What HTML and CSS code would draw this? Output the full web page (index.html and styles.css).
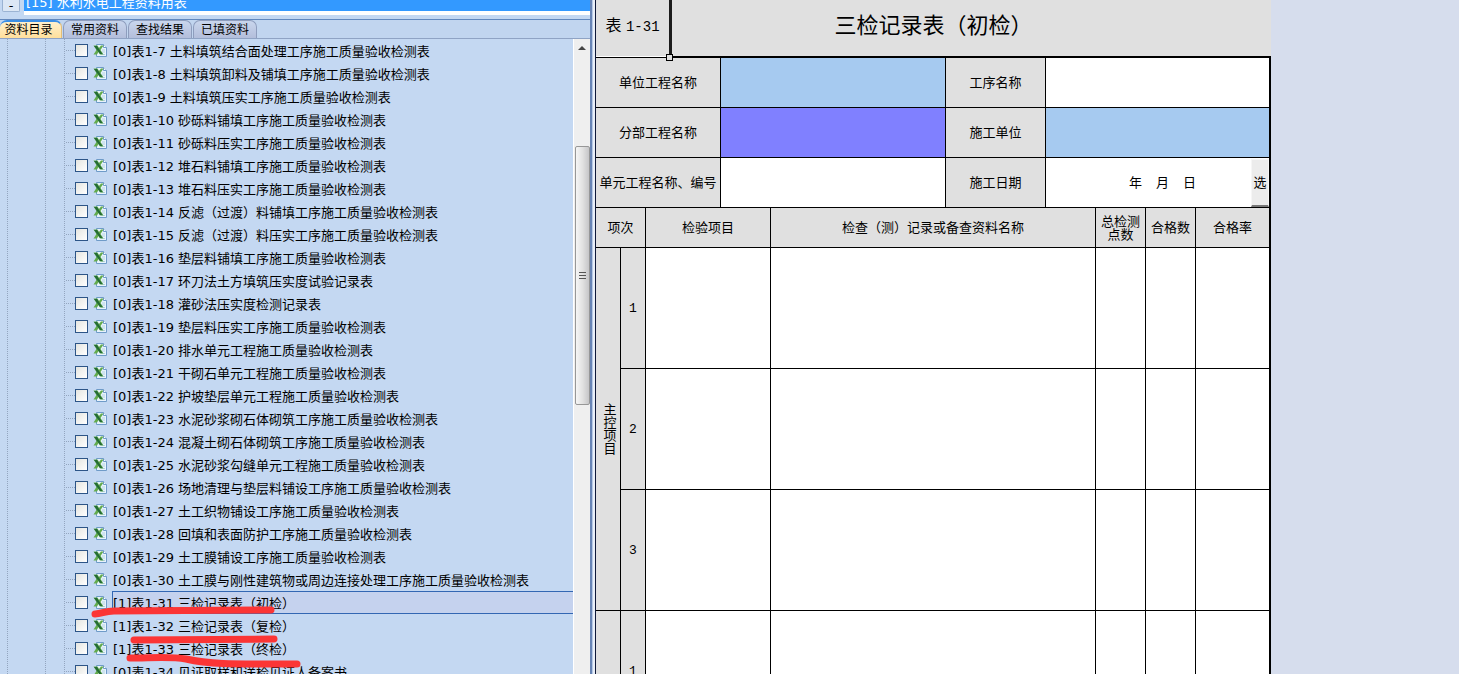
FILE: index.html
```html
<!DOCTYPE html>
<html lang="zh-CN">
<head>
<meta charset="utf-8">
<title>水利水电工程资料用表</title>
<link rel="stylesheet" href="styles.css">
</head>
<body>
<svg class="sprite" aria-hidden="true">
  <symbol id="xls" viewBox="0 0 15 15">
    <path d="M3.500 1.500h7l3 3v9h-10z" fill="#e8f3fd" stroke="#6f9bc8"/>
    <path d="M10.500 1.500v3h3" fill="#fff" stroke="#6f9bc8"/>
    <path d="M9 7h3M9 9h3M8 11.500h4" stroke="#b5d3e0"/>
    <path d="M0.500 2.500h4l1.500 2.500 2-2.500h2.500L7.500 7l3 4.500H7L5.500 9 4 11.500H0.500L3.500 7z" fill="#63ab4c"/>
    <path d="M1 3h3l5.500 8H7z" fill="#246b35"/>
  </symbol>
</svg>
<div class="app">
  <aside class="side">
    <div class="topbar">
      <button class="fold" aria-label="折叠">-</button>
      <div class="book"><span>[15] 水利水电工程资料用表</span></div>
    </div>
    <nav class="tabs">
      <button class="tab active">资料目录</button>
      <button class="tab">常用资料</button>
      <button class="tab">查找结果</button>
      <button class="tab">已填资料</button>
    </nav>
    <div class="body">
      <ul class="tree">
        <li><label><input type="checkbox"><svg><use href="#xls"/></svg><span>[0]表1-7 土料填筑结合面处理工序施工质量验收检测表</span></label></li>
        <li><label><input type="checkbox"><svg><use href="#xls"/></svg><span>[0]表1-8 土料填筑卸料及铺填工序施工质量验收检测表</span></label></li>
        <li><label><input type="checkbox"><svg><use href="#xls"/></svg><span>[0]表1-9 土料填筑压实工序施工质量验收检测表</span></label></li>
        <li><label><input type="checkbox"><svg><use href="#xls"/></svg><span>[0]表1-10 砂砾料铺填工序施工质量验收检测表</span></label></li>
        <li><label><input type="checkbox"><svg><use href="#xls"/></svg><span>[0]表1-11 砂砾料压实工序施工质量验收检测表</span></label></li>
        <li><label><input type="checkbox"><svg><use href="#xls"/></svg><span>[0]表1-12 堆石料铺填工序施工质量验收检测表</span></label></li>
        <li><label><input type="checkbox"><svg><use href="#xls"/></svg><span>[0]表1-13 堆石料压实工序施工质量验收检测表</span></label></li>
        <li><label><input type="checkbox"><svg><use href="#xls"/></svg><span>[0]表1-14 反滤（过渡）料铺填工序施工质量验收检测表</span></label></li>
        <li><label><input type="checkbox"><svg><use href="#xls"/></svg><span>[0]表1-15 反滤（过渡）料压实工序施工质量验收检测表</span></label></li>
        <li><label><input type="checkbox"><svg><use href="#xls"/></svg><span>[0]表1-16 垫层料铺填工序施工质量验收检测表</span></label></li>
        <li><label><input type="checkbox"><svg><use href="#xls"/></svg><span>[0]表1-17 环刀法土方填筑压实度试验记录表</span></label></li>
        <li><label><input type="checkbox"><svg><use href="#xls"/></svg><span>[0]表1-18 灌砂法压实度检测记录表</span></label></li>
        <li><label><input type="checkbox"><svg><use href="#xls"/></svg><span>[0]表1-19 垫层料压实工序施工质量验收检测表</span></label></li>
        <li><label><input type="checkbox"><svg><use href="#xls"/></svg><span>[0]表1-20 排水单元工程施工质量验收检测表</span></label></li>
        <li><label><input type="checkbox"><svg><use href="#xls"/></svg><span>[0]表1-21 干砌石单元工程施工质量验收检测表</span></label></li>
        <li><label><input type="checkbox"><svg><use href="#xls"/></svg><span>[0]表1-22 护坡垫层单元工程施工质量验收检测表</span></label></li>
        <li><label><input type="checkbox"><svg><use href="#xls"/></svg><span>[0]表1-23 水泥砂浆砌石体砌筑工序施工质量验收检测表</span></label></li>
        <li><label><input type="checkbox"><svg><use href="#xls"/></svg><span>[0]表1-24 混凝土砌石体砌筑工序施工质量验收检测表</span></label></li>
        <li><label><input type="checkbox"><svg><use href="#xls"/></svg><span>[0]表1-25 水泥砂浆勾缝单元工程施工质量验收检测表</span></label></li>
        <li><label><input type="checkbox"><svg><use href="#xls"/></svg><span>[0]表1-26 场地清理与垫层料铺设工序施工质量验收检测表</span></label></li>
        <li><label><input type="checkbox"><svg><use href="#xls"/></svg><span>[0]表1-27 土工织物铺设工序施工质量验收检测表</span></label></li>
        <li><label><input type="checkbox"><svg><use href="#xls"/></svg><span>[0]表1-28 回填和表面防护工序施工质量验收检测表</span></label></li>
        <li><label><input type="checkbox"><svg><use href="#xls"/></svg><span>[0]表1-29 土工膜铺设工序施工质量验收检测表</span></label></li>
        <li><label><input type="checkbox"><svg><use href="#xls"/></svg><span>[0]表1-30 土工膜与刚性建筑物或周边连接处理工序施工质量验收检测表</span></label></li>
        <li class="selected"><label><input type="checkbox"><svg><use href="#xls"/></svg><span>[1]表1-31 三检记录表（初检）</span></label></li>
        <li><label><input type="checkbox"><svg><use href="#xls"/></svg><span>[1]表1-32 三检记录表（复检）</span></label></li>
        <li><label><input type="checkbox"><svg><use href="#xls"/></svg><span>[1]表1-33 三检记录表（终检）</span></label></li>
        <li><label><input type="checkbox"><svg><use href="#xls"/></svg><span>[0]表1-34 见证取样和送检见证人备案书</span></label></li>
      </ul>
      <svg class="marks" viewBox="0 0 220 70" aria-hidden="true">
        <path d="M5 18C12 18 14 15 24 15L181 14"/>
        <path d="M44 44L184 43"/>
        <path d="M40 62C60 62 80 60 96 63C122 69 150 68 207 68"/>
      </svg>
      <div class="scroll">
        <svg class="arrow" viewBox="0 0 8 4"><path d="M4 0l4 4H0z" fill="#444"/></svg>
        <div class="thumb"><i></i><i></i><i></i></div>
      </div>
    </div>
  </aside>
  <div class="splitter"></div>
  <main class="sheet">
    <header class="heading">
      <div class="code">表 <span>1-31</span></div>
      <h1>三检记录表（初检）</h1>
    </header>
    <table>
      <colgroup><col class="w25"><col class="w25"><col class="w75"><col class="w50"><col class="w175"><col class="w100"><col class="w50"><col class="w50"><col class="w50"><col></colgroup>
      <tbody>
        <tr class="info"><th colspan="3">单位工程名称</th><td colspan="2" class="sky"></td><th>工序名称</th><td colspan="4"></td></tr>
        <tr class="info"><th colspan="3">分部工程名称</th><td colspan="2" class="violet"></td><th>施工单位</th><td colspan="4" class="sky"></td></tr>
        <tr class="info"><th colspan="3">单元工程名称、编号</th><td colspan="2"></td><th>施工日期</th><td colspan="4"><div class="date"><div class="ymd"><span>年</span><span>月</span><span>日</span></div><button class="pick">选</button></div></td></tr>
        <tr class="cols"><th colspan="2">项次</th><th colspan="2">检验项目</th><th colspan="3">检查（测）记录或备查资料名称</th><th>总检测<br>点数</th><th>合格数</th><th>合格率</th></tr>
      </tbody>
    </table>
    <table>
      <colgroup><col class="w25"><col class="w25"><col class="w125"><col class="w325"><col class="w50"><col class="w50"><col></colgroup>
      <tbody>
        <tr class="item"><th rowspan="3"><span class="vertical">主控项目</span></th><th>1</th><td></td><td></td><td></td><td></td><td></td></tr>
        <tr class="item"><th>2</th><td></td><td></td><td></td><td></td><td></td></tr>
        <tr class="item"><th>3</th><td></td><td></td><td></td><td></td><td></td></tr>
        <tr class="item"><th></th><th>1</th><td></td><td></td><td></td><td></td><td></td></tr>
      </tbody>
    </table>
  </main>
</div>
</body>
</html>
```
FILE: styles.css
```css
* { box-sizing: border-box; }
body {
  margin: 0;
  background: #d6dded;
  color: #000;
  font: 13px "DejaVu Sans", "Noto Sans CJK SC", sans-serif;
}
button { font: inherit; color: inherit; padding: 0; margin: 0; }
.sprite { display: none; }
.app { display: flex; height: 100vh; overflow: hidden; }

/* Left panel */
.side { flex: none; width: 590px; display: flex; flex-direction: column; background: #c4d8f2; }
.topbar { flex: none; display: flex; gap: 4px; height: 20px; padding: 0 0 4px 2px; border-bottom: 1px solid #6388bd; }
.fold { width: 18px; height: 12px; line-height: 8px; border: 1px solid #9bb3d3; border-top: 0; border-radius: 0 0 2px 2px; background: #dce7f5; }
.book { flex: 1; height: 15px; background: #3399ff; border-bottom: 4px solid #fff; color: #fff; display: flex; align-items: flex-end; }
.book span { line-height: 16px; padding-left: 2px; }
.tabs { flex: none; display: flex; align-items: flex-end; gap: 1px; height: 19px; border-bottom: 1px solid #8fa3c4; background: #c1d5ef; }
.tab {
  width: 64px; height: 18px; line-height: 18px; font-size: 12px; white-space: nowrap;
  border: 1px solid #8e9dbd; border-bottom: 0; border-radius: 7px 7px 0 0;
  background: linear-gradient(#c9d6ed, #b3bedb);
}
.tab.active { width: 62px; padding-right: 4px; border-color: #e2bd78; border-top: 2px solid #3a8ee6; border-left: 0; background: linear-gradient(#fff0cc, #ffdf9c); line-height: 16px; }
.body { flex: 1; min-height: 0; display: flex; position: relative; overflow: hidden; }

.tree {
  flex: 1; margin: 0; padding: 0; list-style: none; background-color: #c4d8f2;
  background-image:
    repeating-linear-gradient(#93a5bf 0 1px, transparent 1px 2px),
    repeating-linear-gradient(#93a5bf 0 1px, transparent 1px 2px),
    repeating-linear-gradient(#93a5bf 0 1px, transparent 1px 2px);
  background-size: 1px 100%;
  background-position: 7px 0, 45px 0, 64px 0;
  background-repeat: no-repeat;
}
.tree li { height: 23px; padding-left: 65px; }
.tree label { display: flex; align-items: center; height: 23px; }
.tree label::before { content: ""; width: 10px; height: 1px; background: repeating-linear-gradient(90deg, transparent 0 1px, #93a5bf 1px 2px); }
.tree input { appearance: none; flex: none; width: 13px; height: 13px; margin: 0 5px 0 0; border: 1px solid #2d5587; background: linear-gradient(135deg, #e5e5e0, #fff); }
.tree svg { flex: none; width: 15px; height: 15px; margin-right: 4px; }
.tree span { flex: 1; height: 23px; line-height: 25px; padding-left: 1px; white-space: nowrap; }
.tree .selected span { background: #c5d2ee; border: 1px solid #3367b3; border-right: 0; line-height: 23px; padding-left: 0; }
.marks { position: absolute; left: 90px; bottom: 8px; width: 220px; height: 70px; overflow: visible; }
.marks path { fill: none; stroke: #fb3535; stroke-width: 7; stroke-linecap: round; }

.scroll { flex: none; width: 17px; padding: 7px 1px 0; background: #efefef; border-left: 1px solid #fff; display: flex; flex-direction: column; align-items: center; }
.arrow { width: 8px; height: 4px; }
.thumb {
  width: 15px; height: 259px; margin-top: 96px; border: 1px solid #979797; border-radius: 2px;
  background: linear-gradient(90deg, #f6f6f6, #e2e2e2 50%, #c6c6c8);
  display: flex; flex-direction: column; align-items: center; justify-content: center; gap: 2px;
}
.thumb i { width: 7px; height: 1px; background: #555; }
.splitter { flex: none; width: 5px; background: linear-gradient(90deg, #6784b5 0 2px, #b8cae6 2px 3px, #e8eef8 3px 5px); }

/* Form sheet */
.sheet { flex: none; border-left: 1px solid #0d1838; font-family: "Liberation Sans", "Noto Sans CJK SC", sans-serif; }
.heading { display: grid; grid-template-columns: 76px 1fr 76px; height: 58px; background: #e0e0e0; border-bottom: 2px solid #000; }
.code { position: relative; border-right: 3px solid #1c1c1c; font-size: 16px; line-height: 52px; text-align: center; white-space: nowrap; }
.code::before { content: ""; position: absolute; left: 0; right: 0; top: 56px; height: 1px; background: #fff; }
.code::after { content: ""; position: absolute; right: -4px; top: 54px; width: 5px; height: 5px; background: #e0e0e0; border: 1px solid #000; }
.code span { font-family: "Liberation Mono", monospace; font-size: 14px; }
h1 { margin: 0; font-size: 22px; font-weight: 400; line-height: 52px; text-align: center; }
table { table-layout: fixed; width: 675px; border-collapse: separate; border-spacing: 0; border-right: 1px solid #000; background: #fff; }
.w25 { width: 25px; }
.w50 { width: 50px; }
.w75 { width: 75px; }
.w100 { width: 100px; }
.w125 { width: 125px; }
.w175 { width: 175px; }
.w325 { width: 325px; }
th, td { padding: 0; border: solid #000; border-width: 0 1px 1px 0; font-weight: 400; line-height: 13px; white-space: nowrap; }
th { background: #e0e0e0; }
.info > * { height: 50px; }
.cols > * { height: 40px; }
.item > * { height: 121px; }
.item th { font-family: "Liberation Mono", "Noto Sans CJK SC", monospace; }
.sky { background: #a6caf0; }
.violet { background: #8080ff; }
.vertical { writing-mode: vertical-rl; vertical-align: middle; }
.date { display: flex; align-items: stretch; height: 49px; }
.ymd { flex: 1; display: flex; justify-content: center; align-items: center; gap: 14px; padding-left: 28px; }
.pick { width: 18px; margin-top: 1px; border: 1px solid #f6f6f6; border-bottom: 2px solid #777; background: #ececec; }
```
